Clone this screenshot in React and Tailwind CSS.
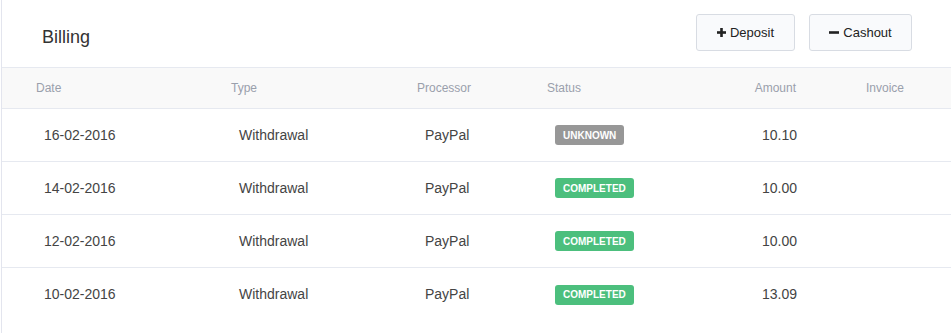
import React from "react";

const rows = [
  { date: "16-02-2016", status: "UNKNOWN", amount: "10.10" },
  { date: "14-02-2016", status: "COMPLETED", amount: "10.00" },
  { date: "12-02-2016", status: "COMPLETED", amount: "10.00" },
  { date: "10-02-2016", status: "COMPLETED", amount: "13.09" },
];

function PlusIcon() {
  return (
    <svg width="9" height="9" viewBox="0 0 9 9" className="block">
      <rect x="3.2" y="0" width="2.6" height="9" fill="#222" />
      <rect x="0" y="3.2" width="9" height="2.6" fill="#222" />
    </svg>
  );
}

function MinusIcon() {
  return (
    <svg width="10" height="9" viewBox="0 0 10 9" className="block">
      <rect x="0" y="3.2" width="10" height="2.6" fill="#222" />
    </svg>
  );
}

export default function App() {
  return (
    <div
      className="w-[951px] h-[333px] bg-white pl-px overflow-hidden"
      style={{ fontFamily: '"Liberation Sans", Arial, sans-serif' }}
    >
      <div className="h-full border-l border-[#e3e5ee] flex flex-col">
        <div className="h-[67px] flex items-center justify-between">
          <div className="pl-[40px] pt-[7px] text-[18px] text-[#333]">Billing</div>
          <div className="flex gap-[14px] pr-[39px] pb-[2px]">
            <button className="w-[99px] h-[37px] rounded-[3px] border border-[#d8dce3] bg-[#f9fafc] flex items-center justify-center gap-[4px] text-[13px] text-[#222]">
              <PlusIcon />
              <span>Deposit</span>
            </button>
            <button className="w-[103px] h-[37px] rounded-[3px] border border-[#d8dce3] bg-[#f9fafc] flex items-center justify-center gap-[4px] text-[13px] text-[#222]">
              <MinusIcon />
              <span>Cashout</span>
            </button>
          </div>
        </div>
        <div className="h-[42px] flex items-center bg-[#f9f9f9] border-y border-[#e6e9f0] text-[12px] text-[#9aa0ac]">
          <div className="w-[195px] pl-[34px]">Date</div>
          <div className="w-[186px] pl-[34px]">Type</div>
          <div className="w-[130px] pl-[34px]">Processor</div>
          <div className="w-[167px] pl-[34px]">Status</div>
          <div className="w-[126px] pr-[10px] text-right">Amount</div>
          <div className="pl-[60px]">Invoice</div>
        </div>
        {rows.map((r, i) => (
          <div
            key={i}
            className={`h-[53px] flex items-center text-[14px] text-[#444] ${i < rows.length - 1 ? "border-b border-[#e6e9f0]" : ""}`}
          >
            <div className="w-[195px] pl-[42px]">{r.date}</div>
            <div className="w-[186px] pl-[42px]">Withdrawal</div>
            <div className="w-[130px] pl-[42px]">PayPal</div>
            <div className="w-[167px] pl-[42px] flex">
              <span
                className={`h-[20px] px-[8px] rounded-[3px] flex items-center text-[10px] font-bold text-white ${r.status === "UNKNOWN" ? "bg-[#979797]" : "bg-[#4cbf7d]"}`}
              >
                {r.status}
              </span>
            </div>
            <div className="w-[126px] pr-[9px] text-right">{r.amount}</div>
            <div className="pl-[60px]"></div>
          </div>
        ))}
      </div>
    </div>
  );
}
